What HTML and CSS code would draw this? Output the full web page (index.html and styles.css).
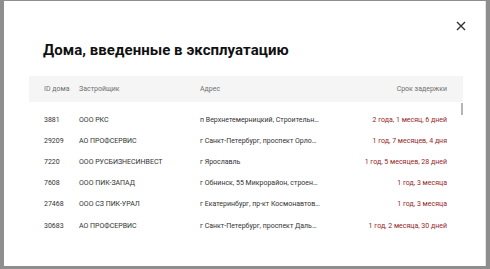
FILE: index.html
```html
<!DOCTYPE html>
<html lang="ru">
<head>
<meta charset="utf-8">
<link rel="stylesheet" href="styles.css">
</head>
<body>
<div class="modal">
  <button class="close" aria-label="Закрыть">
    <svg width="10" height="10" viewBox="0 0 10 10"><path d="M1 1L9 9M9 1L1 9" stroke="#333" stroke-width="1.4" fill="none"/></svg>
  </button>
  <h1 class="title">Дома, введенные в эксплуатацию</h1>
  <div class="table">
    <div class="row head">
      <span>ID дома</span><span>Застройщик</span><span>Адрес</span><span class="delay">Срок задержки</span>
    </div>
    <div class="body">
      <div class="row"><span>3881</span><span>ООО РКС</span><span class="addr">п Верхнетемерницкий, Строительная, 1</span><span class="delay">2 года, 1 месяц, 6 дней</span></div>
      <div class="row"><span>29209</span><span>АО ПРОФСЕРВИС</span><span class="addr">г Санкт-Петербург, проспект Орловский, 1</span><span class="delay">1 год, 7 месяцев, 4 дня</span></div>
      <div class="row"><span>7220</span><span>ООО РУСБИЗНЕСИНВЕСТ</span><span class="addr">г Ярославль</span><span class="delay">1 год, 5 месяцев, 28 дней</span></div>
      <div class="row"><span>7608</span><span>ООО ПИК-ЗАПАД</span><span class="addr">г Обнинск, 55 Микрорайон, строение 1</span><span class="delay">1 год, 3 месяца</span></div>
      <div class="row"><span>27468</span><span>ООО СЗ ПИК-УРАЛ</span><span class="addr">г Екатеринбург, пр-кт Космонавтов, 1</span><span class="delay">1 год, 3 месяца</span></div>
      <div class="row"><span>30683</span><span>АО ПРОФСЕРВИС</span><span class="addr">г Санкт-Петербург, проспект Дальневосточный, 1</span><span class="delay">1 год, 2 месяца, 30 дней</span></div>
      <div class="scroll"></div>
    </div>
  </div>
</div>
</body>
</html>
```
FILE: styles.css
```css
html, body {
  margin: 0;
  padding: 0;
  height: 100%;
}
body {
  background: #8e8e8e;
  font-family: "Roboto", "Liberation Sans", sans-serif;
  box-sizing: border-box;
  padding: 1px 4px 3px 4px;
}
.modal {
  position: relative;
  background: #fff;
  height: 100%;
  box-sizing: border-box;
  padding: 38px 22px 0 25px;
  border-right: 1px solid #e4e4e4;
}
.close {
  position: absolute;
  top: 19px;
  right: 18px;
  width: 12px;
  height: 12px;
  padding: 1px;
  border: 0;
  background: none;
  display: flex;
  align-items: center;
  justify-content: center;
}
.title {
  margin: 0 0 0 14px;
  font-size: 15px;
  font-weight: 700;
  color: #111;
  line-height: 22px;
  letter-spacing: 0.05px;
}
.table {
  margin-top: 15px;
  font-size: 7px;
  color: #333;
}
.row {
  display: grid;
  grid-template-columns: 35px 121px 126px 1fr;
  align-items: center;
  height: 21.2px;
  padding: 0 16px 0 15px;
}
.row span {
  white-space: nowrap;
  overflow: hidden;
  text-overflow: ellipsis;
}
.head {
  background: #f5f5f5;
  height: 26px;
  color: #707070;
  margin-bottom: 7px;
}
.body {
  position: relative;
}
.delay {
  text-align: right;
}
.body .delay {
  color: #962626;
}
.addr {
  padding-right: 6px;
}
.scroll {
  position: absolute;
  right: 0;
  top: -6px;
  width: 2px;
  height: 12px;
  background: #b5b5b5;
}
```
